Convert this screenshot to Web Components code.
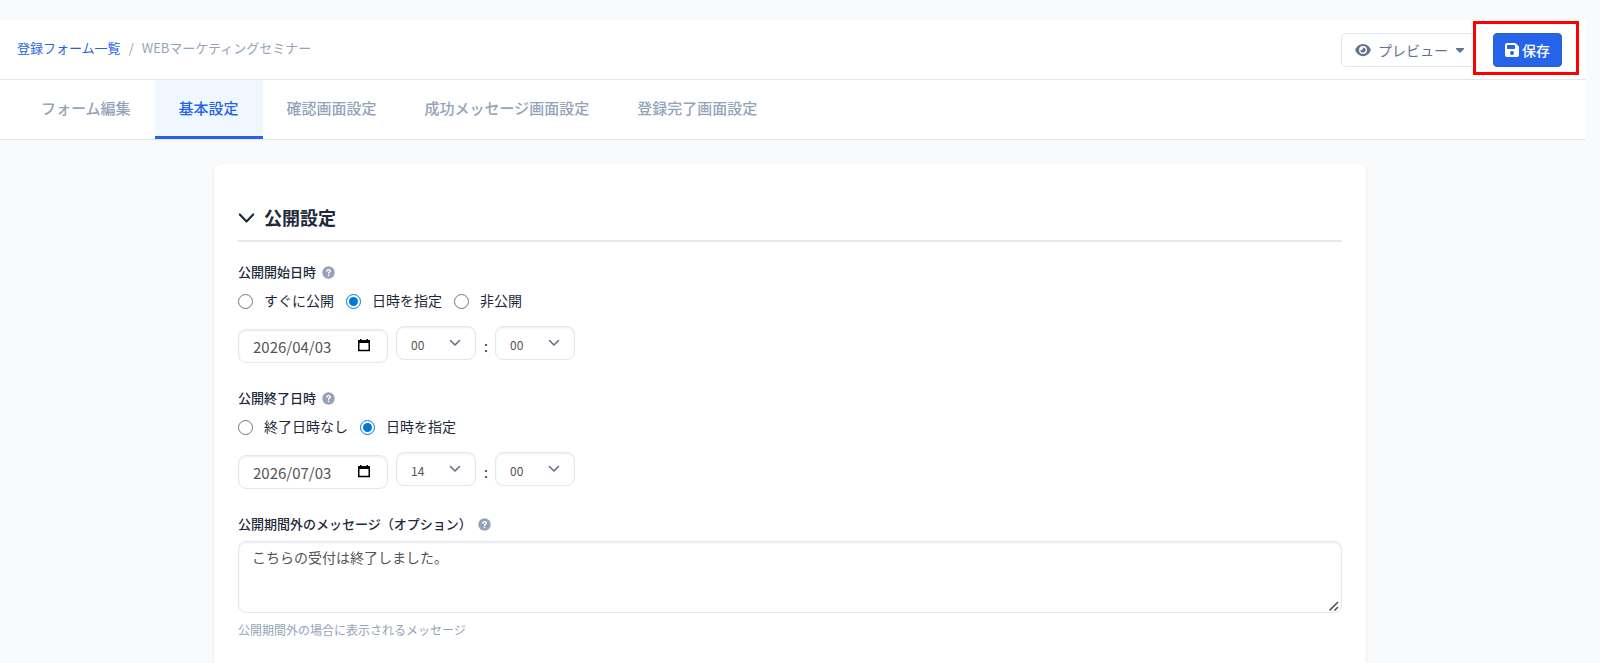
<!DOCTYPE html>
<html lang="ja">
<head>
<meta charset="utf-8">
<meta name="viewport" content="width=device-width, initial-scale=1">
<title>基本設定 - WEBマーケティングセミナー</title>
<style>
html { background: #f8fafc; }
body {
  margin: 0;
  font-family: "Noto Sans CJK JP", "Noto Sans", sans-serif;
  font-size: 14px;
  line-height: 20px;
  color: #1e293b;
  --line: #e2e8f0;
  --muted: #94a3b8;
  --primary: #2563eb;
}
</style>
</head>
<body>
<form-settings-page></form-settings-page>

<script>
const define = (name, html, setup) => {
  const template = document.createElement('template');
  template.innerHTML = '<style>*{box-sizing:border-box}</style>' + html;
  customElements.define(name, class extends HTMLElement {
    connectedCallback() {
      if (this.shadowRoot) return;
      const root = this.attachShadow({ mode: 'open' });
      root.append(template.content.cloneNode(true));
      if (setup) setup(this, root);
    }
  });
};

define('bread-crumb', `
<style>
:host { display: block; font-size: 13px; line-height: 30px; color: var(--muted); }
nav { display: flex; gap: 8px; }
a { color: var(--primary); text-decoration: none; }
</style>
<nav aria-label="パンくず"><a href="#forms">登録フォーム一覧</a><span>/</span><span><slot></slot></span></nav>`);

define('preview-button', `
<style>
:host { display: block; }
button { display: flex; align-items: center; height: 34px; padding: 0 11px 0 13px; font: inherit; color: #64748b;
  background: #fff; border: 1px solid var(--line); border-radius: 4px; }
.eye { width: 16px; height: 14px; margin-right: 7px; }
.caret { width: 8px; height: 5px; margin-left: 8px; }
</style>
<button type="button">
<svg class="eye" viewBox="0 0 576 512" fill="currentColor" aria-hidden="true"><path d="M288 32c-81 0-146 37-193 80C48 156 17 208 3 244c-3 8-3 16 0 24 14 36 45 88 92 132 47 43 112 80 193 80s146-37 193-80c47-44 78-96 92-132 3-8 3-16 0-24-14-36-45-88-92-132C434 69 369 32 288 32zM144 256a144 144 0 1 1 288 0 144 144 0 1 1-288 0zm144-64c0 35-29 64-64 64-7 0-14-1-20-3-6-2-12 2-12 7 0 7 1 14 3 21 14 51 67 82 118 68s82-67 68-118c-11-42-48-70-90-71-6 0-9 6-7 12 2 6 4 13 4 20z"/></svg>
<slot></slot>
<svg class="caret" viewBox="0 0 8 5" fill="currentColor" aria-hidden="true"><path d="M0 0h8v1L4 5 0 1z"/></svg>
</button>`);

define('save-button', `
<style>
:host { display: block; position: relative; }
button { display: flex; align-items: center; gap: 3px; height: 34px; padding: 0 11px; font: inherit; font-weight: 500; color: #fff;
  background: var(--primary); border: 1px solid #2365c4; border-radius: 4px; }
svg { width: 14px; height: 16px; }
.callout { position: absolute; inset: -12px -17px -8px -20px; border: 3px solid #f00; pointer-events: none; }
</style>
<button type="button">
<svg viewBox="0 0 448 512" fill="currentColor" aria-hidden="true"><path fill-rule="evenodd" d="M64 32C29 32 0 61 0 96v320c0 35 29 64 64 64h320c35 0 64-29 64-64V173c0-17-7-33-19-45l-77-77c-12-12-28-19-45-19H64zm0 80c0-9 7-16 16-16h208c18 0 32 7 32 16v80c0 18-14 32-32 32H80c-9 0-16-14-16-32v-80zm160 176a64 64 0 1 1 0 128 64 64 0 1 1 0-128z"/></svg>
<slot></slot>
</button><span class="callout"></span>`);

define('tab-item', `
<style>
:host { display: block; }
a { display: block; height: 59px; padding: 18px 24px 0; font-size: 15px; font-weight: 500; color: var(--muted); text-decoration: none; }
:host([active]) a { color: var(--primary); background: #f0f7ff; border-bottom: 3px solid var(--primary); }
</style>
<a href="#tab"><slot></slot></a>`, (host, root) => {
  if (host.hasAttribute('active')) root.querySelector('a').setAttribute('aria-current', 'page');
});

define('help-icon', `
<style>
:host { display: block; width: 13px; height: 13px; }
button { display: grid; place-items: center; width: 13px; height: 13px; padding: 0; border: 0; background: none; }
</style>
<button type="button" aria-label="ヘルプ"><svg width="13" height="13" viewBox="0 0 13 13" aria-hidden="true"><circle cx="6.5" cy="6.5" r="6.2" fill="#94a3b8"/><path d="M4.8 5.1c.1-1 .8-1.500 1.700-1.500 1 0 1.800.5 1.800 1.400 0 1.100-1.700 1.100-1.700 2.300" fill="none" stroke="#fff" stroke-width="1.400" stroke-linecap="round"/><circle cx="6.6" cy="9.300" r=".9" fill="#fff"/></svg></button>`);

define('field-label', `
<style>
:host { display: flex; align-items: center; gap: 6px; height: 20px; font-size: 13px; font-weight: 500; }
</style>
<slot></slot><help-icon></help-icon>`);

define('radio-group', `
<style>
:host { display: flex; gap: 12px; }
label { display: flex; align-items: center; gap: 11px; }
input { width: 15px; height: 15px; margin: 2px 0 0; accent-color: #0078d7; }
</style>`, (host, root) => {
  host.getAttribute('options').split(',').forEach((text, i) => {
    const label = document.createElement('label');
    const input = document.createElement('input');
    input.type = 'radio';
    input.name = 'choice';
    input.checked = i === Number(host.getAttribute('selected'));
    label.append(input, text);
    root.append(label);
  });
});

define('date-time-row', `
<style>
:host { display: flex; gap: 8px; align-items: flex-start; color: #555; }
.date { position: relative; margin-top: 3px; }
input, select { height: 34px; border: 1px solid var(--line); border-radius: 8px; background: #fff;
  box-shadow: inset 0 1px 2px rgba(15, 23, 42, .08); color: inherit; font-family: inherit; margin: 0; outline: 0; }
input { display: block; width: 150px; padding: 0 14px; font-size: 15px; }
.date button { position: absolute; top: 9px; right: 17px; width: 14px; height: 15px; padding: 0; border: 0; background: none; }
.date svg { display: block; }
select { appearance: none; width: 80px; padding: 2px 14px 0; font-size: 12px;
  background: #fff url("data:image/svg+xml,%3Csvg xmlns='http://www.w3.org/2000/svg' width='12' height='8' fill='none' stroke='%23667080' stroke-width='1.6' stroke-linecap='round' stroke-linejoin='round'%3E%3Cpath d='M1.5 1.5 6 6l4.500-4.500'/%3E%3C/svg%3E") no-repeat right 14px top 12px; }
.colon { width: 3px; padding-top: 10px; color: #1e293b; }
</style>
<div class="date"><input type="text" aria-label="日付"><button type="button" aria-label="カレンダー"><svg width="14" height="15" viewBox="0 0 14 15" aria-hidden="true"><path d="M1.750 3h10.500v9.500H1.750z" fill="none" stroke="#000" stroke-width="1.500"/><path d="M1 2.200h12V5H1zM3 1h1.500v2H3zM9.500 1H11v2H9.500z"/></svg></button></div>
<select class="hour" aria-label="時"></select><span class="colon">:</span><select class="minute" aria-label="分"></select>`, (host, root) => {
  root.querySelector('input').value = host.getAttribute('date');
  for (const part of ['hour', 'minute']) {
    root.querySelector('.' + part).add(new Option(host.getAttribute(part)));
  }
});

define('message-field', `
<style>
:host { display: block; }
textarea { display: block; width: 100%; height: 72px; padding: 5px 13px; font: inherit; color: #555; background: #fff;
  border: 1px solid var(--line); border-radius: 8px; box-shadow: inset 0 1px 2px rgba(15, 23, 42, .08); resize: vertical; outline: 0; }
textarea::-webkit-resizer { background: url("data:image/svg+xml,%3Csvg xmlns='http://www.w3.org/2000/svg' width='10' height='10' fill='none' stroke='%23555' stroke-width='1.6'%3E%3Cpath d='M.5 9.500 9 1M5.500 9.500 9 6'/%3E%3C/svg%3E") no-repeat right 2px bottom 1px; }
p { margin: 7px 0 0; font-size: 12px; color: var(--muted); }
</style>
<textarea aria-label="公開期間外のメッセージ（オプション）">こちらの受付は終了しました。</textarea>
<p><slot></slot></p>`);

define('settings-card', `
<style>
:host { display: block; width: 100%; max-width: 1152px; min-height: calc(100vh - 164px); margin: 0 auto; padding: 40px 24px 24px;
  background: #fff; border-radius: 8px 8px 0 0; box-shadow: 0 1px 3px rgba(0, 0, 0, .1); }
h2 { display: flex; align-items: center; gap: 9px; height: 38px; margin: 0; padding-bottom: 10px; font-size: 18px; line-height: 26px; font-weight: 700;
  border-bottom: 2px solid var(--line); }
h2 svg { margin-top: 2px; }
.body { display: flex; flex-direction: column; gap: 25px; padding-top: 20px; }
</style>
<h2><svg width="17" height="12" viewBox="0 0 17 12" fill="none" stroke="currentColor" stroke-width="2.200" stroke-linecap="round" stroke-linejoin="round" aria-hidden="true"><path d="M1.800 2.500 8.500 9.500l6.700-7"/></svg><slot name="title"></slot></h2>
<div class="body"><slot></slot></div>`);

define('form-field', `
<style>
:host { display: block; }
::slotted(radio-group) { margin-top: 8px; }
::slotted(date-time-row) { margin-top: 16px; }
::slotted(message-field) { margin-top: 7px; }
</style>
<slot></slot>`);

define('form-settings-page', `
<style>
:host { display: block; min-height: 100vh; padding: 20px 14px 0 0; overflow: clip; }
header { display: flex; align-items: flex-start; justify-content: space-between; height: 60px; padding: 13px 24px 0 17px; background: #fff; border-bottom: 1px solid var(--line); }
.actions { display: flex; gap: 17px; }
nav { display: flex; height: 60px; padding-left: 17px; background: #fff; border-bottom: 1px solid var(--line); }
main { padding: 24px 6px 0 0; }
</style>
<header>
  <bread-crumb>WEBマーケティングセミナー</bread-crumb>
  <div class="actions"><preview-button>プレビュー</preview-button><save-button>保存</save-button></div>
</header>
<nav aria-label="設定">
  <tab-item>フォーム編集</tab-item><tab-item active>基本設定</tab-item><tab-item>確認画面設定</tab-item><tab-item>成功メッセージ画面設定</tab-item><tab-item>登録完了画面設定</tab-item>
</nav>
<main>
  <settings-card>
    <span slot="title">公開設定</span>
    <form-field>
      <field-label>公開開始日時</field-label>
      <radio-group options="すぐに公開,日時を指定,非公開" selected="1"></radio-group>
      <date-time-row date="2026/04/03" hour="00" minute="00"></date-time-row>
    </form-field>
    <form-field>
      <field-label>公開終了日時</field-label>
      <radio-group options="終了日時なし,日時を指定" selected="1"></radio-group>
      <date-time-row date="2026/07/03" hour="14" minute="00"></date-time-row>
    </form-field>
    <form-field>
      <field-label>公開期間外のメッセージ（オプション）</field-label>
      <message-field>公開期間外の場合に表示されるメッセージ</message-field>
    </form-field>
  </settings-card>
</main>`);
</script>
</body>
</html>
